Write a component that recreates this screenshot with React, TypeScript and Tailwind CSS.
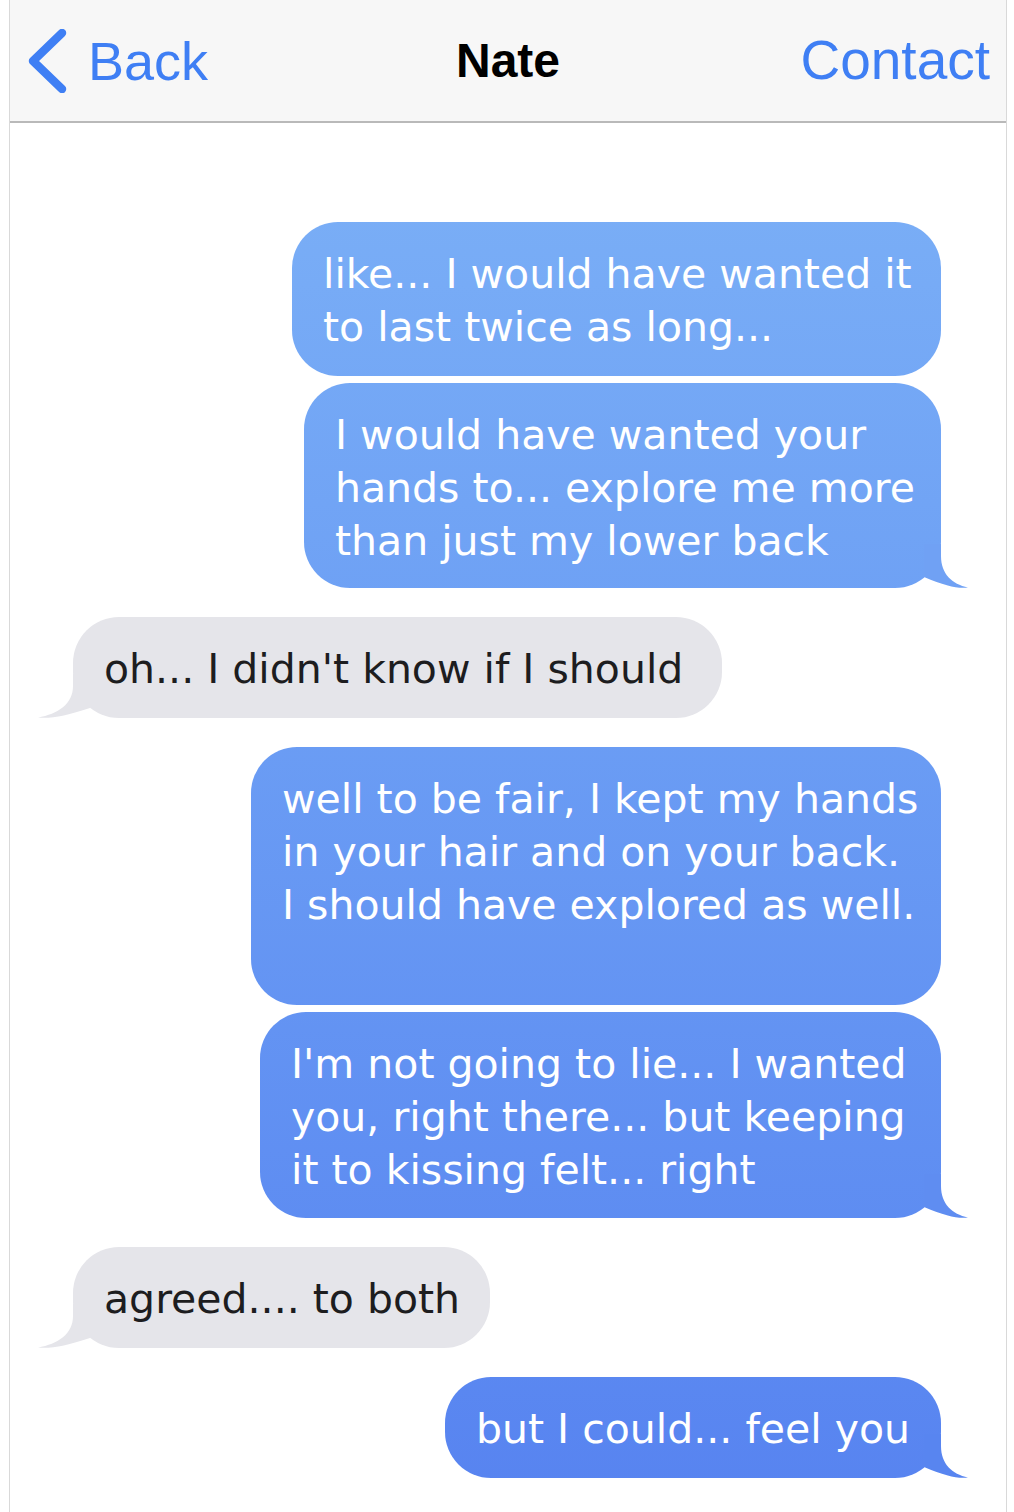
import React from "react";

type Side = "me" | "them";

type Message = {
  from: Side;
  lines: string[];
  width: string;
  height: string;
  tail?: string; // fill for the little tail, if the bubble has one
  gap: string;
};

const messages: Message[] = [
  {
    from: "me",
    lines: ["like... I would have wanted it", "to last twice as long..."],
    width: "w-[649px]",
    height: "h-[154px]",
    gap: "mt-0",
  },
  {
    from: "me",
    lines: ["I would have wanted your", "hands to... explore me more", "than just my lower back"],
    width: "w-[637px]",
    height: "h-[205px]",
    tail: "#70a1f4",
    gap: "mt-[7px]",
  },
  {
    from: "them",
    lines: ["oh... I didn't know if I should"],
    width: "w-[649px]",
    height: "h-[101px]",
    tail: "#e5e5ea",
    gap: "mt-[29px]",
  },
  {
    from: "me",
    lines: ["well to be fair, I kept my hands", "in your hair and on your back.", "I should have explored as well."],
    width: "w-[690px]",
    height: "h-[258px]",
    gap: "mt-[29px]",
  },
  {
    from: "me",
    lines: ["I'm not going to lie... I wanted", "you, right there... but keeping", "it to kissing felt... right"],
    width: "w-[681px]",
    height: "h-[206px]",
    tail: "#5f8df1",
    gap: "mt-[7px]",
  },
  {
    from: "them",
    lines: ["agreed.... to both"],
    width: "w-[417px]",
    height: "h-[101px]",
    tail: "#e5e5ea",
    gap: "mt-[29px]",
  },
  {
    from: "me",
    lines: ["but I could... feel you"],
    width: "w-[496px]",
    height: "h-[101px]",
    tail: "#5885f0",
    gap: "mt-[29px]",
  },
];

// Sent bubbles hook out to the right, received ones a bit further out to the left.
function Tail({ color, side }: { color: string; side: Side }) {
  if (side === "me") {
    return (
      <svg className="absolute bottom-0 right-[-27px]" width="44" height="44" viewBox="0 0 44 44">
        <path d="M17 0 L17 12 C17 30 28 40 44 43.5 C34 45 22 42 0 33 L0 0 Z" fill={color} />
      </svg>
    );
  }
  return (
    <svg className="absolute bottom-0 left-[-35px] -scale-x-100" width="52" height="44" viewBox="0 0 52 44">
      <path d="M17 0 L17 12 C17 30 32 40 52 43.5 C40 45 24 42 0 34 L0 0 Z" fill={color} />
    </svg>
  );
}

function Bubble({ msg }: { msg: Message }) {
  const mine = msg.from === "me";
  const look = mine
    ? "self-end mr-[65px] text-white bg-linear-to-b from-[#7fb4f7] to-[#5783f0] bg-fixed"
    : "self-start ml-[63px] text-[#1d1d1f] bg-[#e5e5ea]";
  return (
    <div
      className={`relative ${msg.gap} ${msg.width} ${msg.height} ${look} rounded-[46px] pl-[31px] pt-[26px] text-[41px] leading-[53px] font-['DejaVu_Sans',Verdana,sans-serif]`}
    >
      {msg.lines.map((l) => (
        <div key={l} className="whitespace-nowrap">
          {l}
        </div>
      ))}
      {msg.tail && <Tail color={msg.tail} side={msg.from} />}
    </div>
  );
}

export default function App() {
  return (
    <div className="w-[1014px] h-[1512px] bg-white overflow-hidden">
      <div className="ml-[9px] w-[998px] h-full border-x border-[#d9d9d9] flex flex-col">
        <header className="grid grid-cols-3 items-center h-[123px] bg-[#f7f7f7] border-b-2 border-[#b9b9b9] px-[16px] font-['Liberation_Sans',Arial,sans-serif]">
          <div className="flex items-center gap-[20px] text-[#3f7ff4]">
            <svg width="42" height="64" viewBox="0 0 42 64" className="shrink-0">
              <path d="M36 4 L7 32 L36 60" fill="none" stroke="#3f7ff4" strokeWidth="8.5" strokeLinecap="round" strokeLinejoin="round" />
            </svg>
            <span className="text-[54px] leading-none">Back</span>
          </div>
          <div className="text-center text-[48px] font-bold text-black leading-none">Nate</div>
          <div className="text-right text-[55px] text-[#3f7ff4] leading-none">Contact</div>
        </header>

        <main className="flex flex-col pt-[99px]">
          {messages.map((m, i) => (
            <Bubble key={i} msg={m} />
          ))}
        </main>
      </div>
    </div>
  );
}
